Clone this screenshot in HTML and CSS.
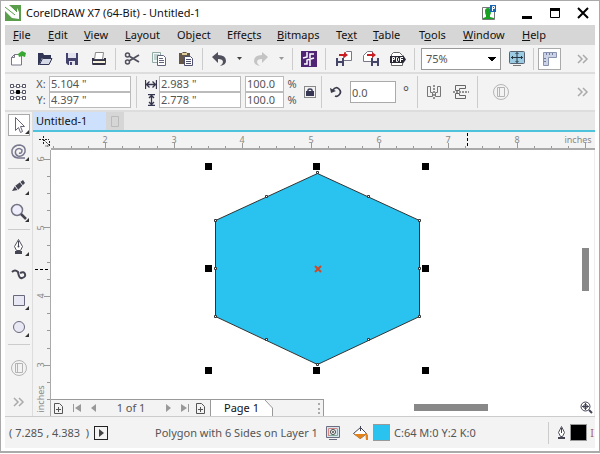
FILE: index.html
```html
<!DOCTYPE html>
<html lang="en">
<head>
<meta charset="utf-8">
<title>CorelDRAW X7 (64-Bit) - Untitled-1</title>
<link rel="stylesheet" href="styles.css">
</head>
<body>
<div class="window">
  <header class="titlebar">
    <svg class="logo" width="16" height="16" viewBox="0 0 16 16"><path fill="#5a9e4b" d="M0 0h16v16H0z"/><path fill="#fff" d="M0 0h4l8 7V3l2 4v7l-7-1-7-7z"/><path stroke="#5a9e4b" d="M0 2l10 8M5 0l7 7"/></svg>
    <h1 class="title">CorelDRAW X7 (64-Bit) - Untitled-1</h1>
    <div class="caption">
      <button class="cap account" aria-label="Account"><svg width="16" height="16" viewBox="0 0 16 16"><path fill="#fff" stroke="#777" d="M1.500 2.500h12v12h-12z"/><path fill="#18a020" d="M4 6q0-3 3-3t3 3q0 3-1 4v2l4 1v1H2v-1l3-1v-2Q4 9 4 6z"/><path fill="#1767b5" d="M9 0h6v7H9z"/><path fill="none" stroke="#fff" d="M11.500 6V1.500h2v2h-2"/></svg></button>
      <button class="cap" aria-label="Minimize"><svg width="12" height="12"><path d="M1 9h10v3H1z"/></svg></button>
      <button class="cap" aria-label="Maximize"><svg width="12" height="12"><path fill="none" stroke="#000" d="M1.500 1.500h9v9h-9z"/><path d="M1 1h10v3H1z"/></svg></button>
      <button class="cap" aria-label="Close"><svg width="12" height="12"><path stroke="#000" stroke-width="2" d="M1 1l10 10M11 1L1 11"/></svg></button>
    </div>
  </header>

  <nav class="menubar">
    <button><u>F</u>ile</button><button><u>E</u>dit</button><button><u>V</u>iew</button><button><u>L</u>ayout</button><button>Ob<u>j</u>ect</button><button>Effe<u>c</u>ts</button><button><u>B</u>itmaps</button><button>Te<u>x</u>t</button><button><u>T</u>able</button><button>T<u>o</u>ols</button><button><u>W</u>indow</button><button><u>H</u>elp</button>
  </nav>

  <div class="toolbar">
    <button class="tool" aria-label="New"><svg width="16" height="16"><path fill="#fff" stroke="#777788" d="M1.500 6.500l3-3h7v10.500h-10zM1.500 6.500h3v-3"/><path fill="#38a832" d="M8 3l4-3 4 2-1 4-3-1-3 1z"/></svg></button>
    <button class="tool" aria-label="Open"><svg width="16" height="16"><path fill="#303654" d="M1 2h5l1 2h7v3H5l-3 7H1z"/><path fill="#d7dbe8" stroke="#303654" d="M5.500 7.500h9.500l-3 6H2.500z"/></svg></button>
    <button class="tool" aria-label="Save"><svg width="16" height="16"><path fill="#43436c" d="M2 2h12v12H4l-2-2z"/><path fill="#e3e4f0" d="M4 2h8v5H4zM5 10h6v4H5z"/><path fill="#43436c" d="M6 11h2v3H6z"/></svg></button>
    <button class="tool" aria-label="Print"><svg width="16" height="16"><path fill="#fff" stroke="#888" d="M4.500 1.500h8l-1 7h-8z"/><path fill="#f5f1dc" stroke="#444458" d="M1.500 8.500h13v5h-13z"/><path fill="#333344" d="M1 7h2v2h10V7h2v3H1zM2 12h12v2H2z"/></svg></button>
    <span class="sep"></span>
    <button class="tool" aria-label="Cut"><svg width="16" height="16" fill="none" stroke="#50505e"><circle cx="3.500" cy="4" r="2" stroke-width="1.500"/><circle cx="3.500" cy="11" r="2" stroke-width="1.500"/><path stroke-width="1.800" d="M5 5l10 6M5 10l10-6"/></svg></button>
    <button class="tool" aria-label="Copy"><svg width="16" height="16"><path fill="#eff7f5" stroke="#91aaa6" d="M1.500 1.500h8v10h-8zM3 4h5M3 6h5M3 8h5"/><path fill="#fff" stroke="#62647e" d="M6.500 4.500h6l2 2v8h-8zM8 7.500h4M8 9.500h5M8 11.500h5"/></svg></button>
    <button class="tool" aria-label="Paste"><svg width="16" height="16"><path fill="#655748" d="M1 2h3l1-1h3l1 1h3v11H1z"/><path fill="#ddd09e" d="M4 2h5v2H4z"/><path fill="#fff" stroke="#4e506d" d="M6.500 5.500h6l2 2v7h-8zM8 8.500h5M8 10.500h5M8 12.500h5"/></svg></button>
    <span class="sep"></span>
    <button class="tool" aria-label="Undo"><svg width="16" height="16"><path fill="#50505c" d="M1 6l6-5v3q8 0 8 6 0 4-6 5 3-2 3-4 0-3-5-3v4z"/></svg></button>
    <button class="drop" aria-label="Undo list"><svg width="5" height="3"><path fill="#444" d="M0 0h5L2.500 3z"/></svg></button>
    <button class="tool" aria-label="Redo"><svg width="16" height="16"><path fill="#c4c4c4" d="M15 6L9 1v3Q1 4 1 10q0 4 6 5-3-2-3-4 0-3 5-3v4z"/></svg></button>
    <button class="drop" aria-label="Redo list"><svg width="5" height="3"><path fill="#999" d="M0 0h5L2.500 3z"/></svg></button>
    <span class="sep"></span>
    <button class="tool" aria-label="Search content"><svg width="16" height="16"><path fill="#512575" d="M0 0h16v16H0z"/><path fill="none" stroke="#fff" stroke-width="1.500" d="M6 1v5L2 7M3 13h3V9l7-2M13 3H9v4M9 9v6"/></svg></button>
    <span class="sep"></span>
    <div class="group">
      <button class="tool" aria-label="Import"><svg width="16" height="16"><path fill="#fff" stroke="#787888" d="M7.500 9.500v-6l3-3h5v9z"/><path fill="#454568" d="M0 7h8v8H0z"/><path fill="#eee" d="M2 7h4v3H2zM2 12h4v3H2z"/><path fill="#c81e22" d="M3 3h5V1l4 3-4 3V5H3z"/></svg></button>
      <button class="tool" aria-label="Export"><svg width="16" height="16"><path fill="#fff" stroke="#787888" d="M.500 10.500v-6l4-4h5v10z"/><path fill="#454568" d="M8 7h8v8H8z"/><path fill="#eee" d="M10 7h4v3h-4zM10 12h4v3h-4z"/><path fill="#c81e22" d="M4 3h5V1l4 3-4 3V5H4z"/></svg></button>
      <button class="tool" aria-label="Publish to PDF"><svg width="16" height="16"><path fill="#fff" stroke="#666" d="M1.500 14.500V3.500l2-2h6l3 3v10z"/><path fill="#292935" d="M0 5h13V4l3 4.500-3 4V12H0z"/><path fill="none" stroke="#fff" d="M2.500 11V6.500h2v2h-2M6.500 6.500h1l1 1v2l-1 1h-1zM10.500 11V6.500H13M11 8.500h2"/></svg></button>
    </div>
    <span class="sep"></span>
    <select class="zoom" aria-label="Zoom level"><option>75%</option></select>
    <button class="tool" aria-label="Full screen preview"><svg width="16" height="16"><rect x=".5" y=".5" width="15" height="12" rx="1" fill="#9bcce3" stroke="#596370"/><path stroke="#283742" fill="none" d="M8 1.500v10M2 6.500h12M6.500 3L8 1.500 9.500 3M6.500 10L8 11.500 9.500 10M4 5L2.500 6.500 4 8M12 5l1.500 1.500L12 8"/><path stroke="#777" d="M4 14.500h8"/></svg></button>
    <span class="sep"></span>
    <button class="tool framed" aria-label="Show rulers"><svg width="16" height="16"><path fill="#ccd2e5" stroke="#8992ae" d="M1.500 1.500h13v5h-8v8h-5z"/><path stroke="#717b9b" d="M4.500 2v2M7.500 2v2M10.500 2v2M2 7.500h2M2 10.500h2"/></svg></button>
    <button class="more" aria-label="More tools"><svg width="12" height="10" fill="none" stroke="#aaa"><path d="M1 1l4 4-4 4M6 1l4 4-4 4" stroke-width="1.500"/></svg></button>
  </div>

  <div class="propbar">
    <button class="tool" aria-label="Object origin"><svg width="16" height="16" fill="#fff" stroke="#555568"><path stroke="#999" d="M1 2.500h14M1 8.500h14M1 13.500h14"/><path d="M.5.5h3v3h-3zM6.500.5h3v3h-3zM12.500.5h3v3h-3zM.5 6.500h3v3h-3zM12.500 6.500h3v3h-3zM.5 12.500h3v3h-3zM6.500 12.500h3v3h-3zM12.500 12.500h3v3h-3z"/><path fill="#000" stroke="#000" d="M6.500 6.500h3v3h-3z"/></svg></button>
    <div class="pair position">
      <label for="px">X:</label><input id="px" value='5.104 "'>
      <label for="py">Y:</label><input id="py" value='4.397 "'>
    </div>
    <span class="sep"></span>
    <div class="pair size">
      <label for="ow" aria-label="Width"><svg width="12" height="9" stroke="#34344f" fill="none"><path d="M.5 0v9M11.500 0v9M2 4.500h8M4.500 1.500l-3 3 3 3M7.500 1.500l3 3-3 3" stroke-width="1.300"/></svg></label><input id="ow" value='2.983 "'>
      <label for="oh" aria-label="Height"><svg width="9" height="12" stroke="#34344f" fill="none"><path d="M1 .5h7M1 11.500h7M4.500 2v8M2 4l2.500-2.500L7 4M2 8l2.500 2.500L7 8" stroke-width="1.300"/></svg></label><input id="oh" value='2.778 "'>
    </div>
    <div class="pair scale">
      <input id="sx" value="100.0"><label for="sx">%</label>
      <input id="sy" value="100.0"><label for="sy">%</label>
    </div>
    <button class="lock" aria-label="Lock ratio"><svg width="8" height="8"><path fill="#373754" d="M0 3h8v5H0z"/><path fill="none" stroke="#373754" stroke-width="1.500" d="M2 3V2q0-1 2-1t2 1v1"/></svg></button>
    <span class="sep"></span>
    <label class="rotate" for="rot" aria-label="Rotation"><svg width="12" height="12" fill="none"><path stroke="#3b3b4b" stroke-width="1.700" d="M3 4q3-4 6-1 3 3 0 6-2 2-4 1"/><path fill="#3b3b4b" d="M0 2l1 5 5-2z"/></svg></label>
    <input id="rot" class="angle" value="0.0">
    <span class="degree">°</span>
    <span class="sep"></span>
    <button class="tool" aria-label="Mirror horizontally"><svg width="16" height="14" fill="none" stroke="#777"><path d="M1.500 1.500v10h5v-4h-2v-6zM14.500 1.500v10h-5v-4h2v-6z"/><path stroke="#333" stroke-dasharray="2 1" d="M8 0v14"/></svg></button>
    <button class="tool" aria-label="Mirror vertically"><svg width="16" height="14" fill="none" stroke="#666"><path d="M12.500.5h-10v5h4v-2h6zM12.500 13.500h-10v-5h4v2h6z"/><path stroke="#333" stroke-dasharray="2 1" d="M0 7h16"/></svg></button>
    <span class="sep"></span>
    <button class="tool quick" aria-label="Quick customize"><svg width="16" height="16" fill="none" stroke="#b4b4b4"><circle cx="8" cy="8" r="7.500"/><path d="M4.500 3.500h7v9h-7zM6.500 3.500v9"/></svg></button>
    <button class="more" aria-label="More properties"><svg width="12" height="10" fill="none" stroke="#aaa"><path d="M1 1l4 4-4 4M6 1l4 4-4 4" stroke-width="1.500"/></svg></button>
  </div>

  <main class="workspace">
    <aside class="toolbox">
      <button class="pick" aria-label="Pick tool"><svg width="20" height="20"><path fill="#fff" stroke="#666678" d="M6.500 2.500v13l3-3 2 5 2-1-2-5h4z"/><path fill="#333" d="M20 15v4h-4z"/></svg></button>
      <button aria-label="Smear tool"><svg width="20" height="20"><path fill="none" stroke="#77778e" stroke-width="1.500" d="M16 16H9Q2 15 3 8q2-5 8-5 6 1 5 7-2 5-7 4-4-2-2-6 3-3 6 0 0 4-3 3"/><path fill="#333" d="M20 15v4h-4z"/></svg></button>
      <hr>
      <button aria-label="Artistic media"><svg width="20" height="20"><path fill="#444452" d="M3 15l3-5 8-6 2 3-7 7z"/><path stroke="#eee" d="M6 10l3 4M11 6l3 4"/><path fill="#333" d="M20 15v4h-4z"/></svg></button>
      <button aria-label="Zoom tool"><svg width="20" height="20"><circle cx="8" cy="7" r="5.500" fill="#eeeefc" stroke="#747485" stroke-width="1.500"/><path stroke="#444454" stroke-width="2.500" d="M12 11l5 5"/><path fill="#333" d="M20 15v4h-4z"/></svg></button>
      <hr>
      <button aria-label="Pen tool"><svg width="20" height="20"><path fill="#fff" stroke="#50505c" d="M7.500 13.500l-2-4 4-7 4 7-2 4z"/><path fill="#444452" d="M6 14h7v3H6zM9 4h1v5H9z"/><circle cx="9.500" cy="9.500" r="1" fill="#444452"/><path fill="#333" d="M20 15v4h-4z"/></svg></button>
      <button aria-label="Curve tool"><svg width="20" height="20"><path fill="none" stroke="#444452" stroke-width="2" d="M3 8q3-3 6 0 1 7 4 6 4-1 3-4t-5-1"/></svg></button>
      <button aria-label="Rectangle tool"><svg width="20" height="20"><path fill="#e8e8f4" stroke="#68687c" d="M4.500 4.500h11v10h-11z"/><path fill="#333" d="M20 15v4h-4z"/></svg></button>
      <button aria-label="Ellipse tool"><svg width="20" height="20"><circle cx="10" cy="9" r="5.500" fill="#e8e8f4" stroke="#68687c"/><path fill="#333" d="M20 15v4h-4z"/></svg></button>
      <hr>
      <button class="customize" aria-label="Quick customize"><svg width="16" height="16" fill="none" stroke="#b4b4b4"><circle cx="8" cy="8" r="7.500"/><path d="M4.500 3.500h7v9h-7zM6.500 3.500v9"/></svg></button>
      <button class="expand" aria-label="More tools"><svg width="12" height="10" fill="none" stroke="#aaa"><path d="M1 1l4 4-4 4M6 1l4 4-4 4" stroke-width="1.500"/></svg></button>
    </aside>

    <section class="document">
      <div class="tabs">
        <button class="tab">Untitled-1</button>
        <button class="newtab" aria-label="New document"><svg width="8" height="11" fill="none" stroke="#bbb"><path d="M.5.5h7v10h-7z"/></svg></button>
      </div>
      <div class="hruler">
        <svg width="100%" height="18">
          <path stroke="#222" fill="none" stroke-dasharray="2 1" d="M10.500 4v8M6 7.500h10M11 8l5 5M16.500 9v5H12"/>
          <path stroke="#999" d="M20.500 14v3M38.500 14v3M55.500 14v3M72.500 11v6M89.500 14v3M106.500 14v3M124.500 14v3M141.500 11v6M158.500 14v3M175.500 14v3M192.500 14v3M209.500 11v6M226.500 14v3M243.500 14v3M261.500 14v3M278.500 11v6M295.500 14v3M312.500 14v3M329.500 14v3M346.500 11v6M363.500 14v3M380.500 14v3M398.500 14v3M415.500 11v6M432.500 14v3M449.500 14v3M466.500 14v3M484.500 11v6M501.500 14v3M518.500 14v3M535.500 14v3M552.500 11v6"/>
          <path stroke="#000" stroke-dasharray="3 2" d="M434.500 1v16"/>
          <path stroke="#aaa" stroke-width="2" d="M18 17h544"/>
          <g class="num"><text x="72" y="11">2</text><text x="141" y="11">3</text><text x="209" y="11">4</text><text x="278" y="11">5</text><text x="346" y="11">6</text><text x="415" y="11">7</text><text x="484" y="11">8</text><text x="545" y="11">inches</text></g>
        </svg>
      </div>
      <div class="editor">
        <div class="vruler">
          <svg width="18" height="100%">
            <path stroke="#999" d="M11 9.500h6M14 26.500h3M14 43.500h3M14 60.500h3M11 77.500h6M14 95.500h3M14 112.500h3M14 129.500h3M11 146.500h6M14 163.500h3M14 180.500h3M14 198.500h3M11 215.500h6M14 232.500h3M14 249.500h3"/>
            <path stroke="#000" stroke-dasharray="3 2" d="M2 119.500h15"/>
            <path stroke="#aaa" stroke-width="2" d="M18 0v266"/>
            <g class="num"><text transform="translate(11 9) rotate(-90)">6</text><text transform="translate(11 78) rotate(-90)">5</text><text transform="translate(11 146) rotate(-90)">4</text><text transform="translate(11 215) rotate(-90)">3</text><text transform="translate(11 249) rotate(-90)">inches</text></g>
          </svg>
        </div>
        <div class="view">
          <div class="stage">
            <svg class="drawing" width="530" height="249">
              <path fill="#2ac2ee" stroke="#333" d="M266.500 23.500l102 47v96l-102 48-102-48v-96z"/>
              <path d="M154 13h7v7h-7zM262 13h7v7h-7zM371 13h7v7h-7zM154 115h7v7h-7zM371 115h7v7h-7zM154 217h7v7h-7zM262 217h7v7h-7zM371 217h7v7h-7z"/>
              <path fill="#fff" stroke="#333" d="M265.500 21.500h2v2h-2zM214.500 45.500h2v2h-2zM316.500 45.500h2v2h-2zM163.500 69.500h2v2h-2zM367.500 69.500h2v2h-2zM163.500 117.500h2v2h-2zM367.500 117.500h2v2h-2zM163.500 165.500h2v2h-2zM367.500 165.500h2v2h-2zM214.500 188.500h2v2h-2zM316.500 188.500h2v2h-2zM265.500 213.500h2v2h-2z"/>
              <path stroke="#d04828" stroke-width="2" d="M264 116l6 6M270 116l-6 6"/>
            </svg>
            <div class="vscroll"></div>
          </div>
          <div class="pagebar">
            <div class="pages">
              <button aria-label="Add page before"><svg width="9" height="11" fill="none" stroke="#555"><path d="M.5.5h5l3 3v7h-8zM4.500 4v5M2 6.500h5"/></svg></button>
              <button aria-label="First page"><svg width="8" height="8" fill="#999"><path d="M0 0h1v8H0zM8 0v8L2 4z"/></svg></button>
              <button aria-label="Previous page"><svg width="5" height="8" fill="#999"><path d="M5 0v8L0 4z"/></svg></button>
              <span class="count">1 of 1</span>
              <button aria-label="Next page"><svg width="5" height="8" fill="#999"><path d="M0 0v8l5-4z"/></svg></button>
              <button aria-label="Last page"><svg width="8" height="8" fill="#999"><path d="M7 0h1v8H7zM0 0v8l6-4z"/></svg></button>
              <button class="add" aria-label="Add page after"><svg width="9" height="11" fill="none" stroke="#555"><path d="M.5.5h5l3 3v7h-8zM4.500 4v5M2 6.500h5"/></svg></button>
              <button class="page">Page 1</button>
              <svg class="slope" width="10" height="16"><path fill="#fff" d="M0 0l7 8v8H0z"/><path fill="none" stroke="#999" d="M0 0l7.500 8v8"/></svg>
              <span class="grip"></span>
            </div>
            <div class="hscroll"></div>
            <button class="navigator" aria-label="Navigator"><svg width="13" height="13" fill="none" stroke="#444457"><circle cx="5.500" cy="5.500" r="4.500"/><circle cx="5.500" cy="5.500" r="2"/><path d="M5.500 2v7M2 5.500h7"/><path stroke-width="2" d="M9 9l3 3"/></svg></button>
          </div>
        </div>
      </div>
    </section>
  </main>

  <footer class="status">
    <span class="coords">( 7.285 , 4.383 &nbsp;)</span>
    <button class="play" aria-label="Details"><svg width="5" height="8"><path fill="#444" d="M0 0v8l5-4z"/></svg></button>
    <span class="object">Polygon with 6 Sides on Layer 1</span>
    <svg class="proof" width="16" height="16"><path fill="#d7e4ed" stroke="#6c6c80" d="M1.500 1.500h13v11h-13zM4 14.500h8"/><path fill="none" stroke="#d38a84" d="M3.500 11V3.500h9"/><path fill="none" stroke="#7fae94" d="M12.500 4v6.500H4"/><circle cx="8" cy="7" r="2.500" fill="#fff" stroke="#444"/><circle cx="8" cy="7" r="1" fill="#444"/></svg>
    <svg class="bucket" width="16" height="16"><path fill="#fff" stroke="#454555" d="M1.500 8.500l7-6 6 6-6 5z"/><path fill="#e4831c" d="M2 9h12l-6 5zM13 7l3 3v5h-2z"/><path stroke="#454555" d="M8.500 1v5"/></svg>
    <span class="swatch cyan"></span>
    <span class="cmyk">C:64 M:0 Y:2 K:0</span>
    <div class="outline">
      <svg width="10" height="16"><path fill="#fff" stroke="#50505c" d="M3.500 11.500l-2-4 3-6 3 6-2 4z"/><path fill="#444452" d="M1 12h7v2H1zM4 3h1v5H4z"/></svg>
      <span class="swatch black"></span>
      <span class="width">I</span>
    </div>
  </footer>
</div>
</body>
</html>
```
FILE: styles.css
```css
* { box-sizing: border-box; }
body {
  margin: 0;
  font-family: "Noto Sans", "Open Sans", sans-serif;
  font-size: 11px;
  line-height: 16px;
  color: #555;
  background: #fff;
}
button, input, select {
  margin: 0;
  padding: 0;
  border: 0;
  border-radius: 0;
  background: none;
  font: inherit;
  color: inherit;
}
button {
  display: flex;
  align-items: center;
  justify-content: center;
  flex: none;
}
svg { display: block; flex: none; }

.window {
  display: flex;
  flex-direction: column;
  min-height: calc(100vh - 1px);
  padding: 0 4px 3px;
  border: 1px solid #aaa;
  border-bottom-width: 2px;
}

.titlebar { display: flex; align-items: center; height: 24px; }
.title { margin: 0; padding-left: 5px; font-size: 11px; font-weight: 400; color: #111; white-space: nowrap; }
.caption { display: flex; align-items: center; margin-left: auto; gap: 16px; padding-right: 6px; }
.cap { width: 12px; height: 20px; }
.account { width: 16px; margin-right: 8px; }

.menubar {
  display: grid;
  grid-template-columns: 35px 36px 41px 52px 50px 50px 59px 37px 46px 44px 59px 1fr;
  height: 20px;
  padding-left: 8px;
  background: #d6d6d6;
  color: #111;
}
.menubar button { display: block; text-align: left; white-space: nowrap; }

.toolbar, .propbar {
  display: flex;
  align-items: center;
  gap: 4px;
  background: #f3f3f3;
  border-bottom: 2px solid #ddd;
}
.toolbar { height: 29px; padding-left: 1px; }
.propbar { height: 38px; padding-left: 1px; }
.group { display: flex; gap: 4px; margin-left: 2px; }
.tool { width: 23px; height: 22px; }
.drop { width: 11px; height: 22px; }
.framed { background: #fff; border: 1px solid #aaa; }
.sep { flex: none; width: 1px; height: 22px; margin-left: 1px; background: #ccc; }
.propbar .sep { height: 32px; }
.more { width: 12px; height: 20px; margin-left: auto; margin-right: 6px; }
.zoom {
  appearance: none;
  width: 80px;
  height: 22px;
  margin-left: 2px;
  padding-left: 4px;
  border: 1px solid #999;
  background-color: #fff;
  background-image: linear-gradient(to bottom left, #000 50%, transparent 51%), linear-gradient(to bottom right, #000 50%, transparent 51%);
  background-size: 4px 4px;
  background-position: right 8px center, right 4px center;
  background-repeat: no-repeat;
}

.pair { display: grid; align-items: center; }
.pair input { width: 100%; height: 16px; padding-left: 1px; border: 1px solid #bbb; background: #fff; }
.pair label { display: flex; justify-content: center; }
.position { grid-template-columns: 16px 82px; }
.size { grid-template-columns: 16px 82px; margin-left: 2px; }
.scale { grid-template-columns: 39px 16px; }
.lock { width: 12px; height: 12px; border: 1px solid #888; }
.rotate { display: flex; justify-content: center; width: 20px; }
.angle { width: 46px; height: 22px; padding-left: 1px; border: 1px solid #aaa; background: #fff; }
.degree { width: 12px; text-align: center; font-size: 14px; }
.quick { margin-left: 7px; }

.workspace { display: flex; flex: 1; background: #f3f3f3; }
.toolbox {
  display: flex;
  flex-direction: column;
  align-items: center;
  width: 28px;
  padding: 2px 2px 0;
  border-right: 1px solid #ddd;
}
.toolbox button { width: 22px; height: 27px; }
.toolbox .pick { height: 22px; margin-bottom: 2px; background: #fff; border: 1px solid #aaa; }
.toolbox hr { width: 22px; margin: 3px 0; border: 0; border-top: 1px solid #ccc; }
.toolbox .customize { height: 40px; }
.toolbox .expand { height: 28px; }

.document { display: flex; flex-direction: column; flex: 1; min-width: 0; }
.tabs { display: flex; height: 20px; background: #e8e8e8; border-bottom: 2px solid #4fc2dc; }
.tab { justify-content: flex-start; width: 73px; padding-left: 3px; background: #cde1fc; color: #111; }
.newtab { width: 18px; background: #d6d6d6; }
.hruler { height: 18px; overflow: hidden; }
.num { font-size: 9px; fill: #888; text-anchor: middle; }
.editor { display: flex; flex: 1; }
.vruler { width: 18px; height: 266px; overflow: hidden; }
.view { display: flex; flex-direction: column; flex: 1; min-width: 0; background: #fff; border-right: 1px solid #eee; }
.stage { display: flex; flex: 1; overflow: hidden; }
.vscroll { width: 7px; height: 43px; margin: 98px 5px 0 auto; background: #888; }
.pagebar { display: flex; align-items: center; height: 17px; }
.pages {
  display: flex;
  align-items: center;
  height: 17px;
  width: 273px;
  padding-left: 3px;
  gap: 10px;
  background: #f3f3f3;
  border-top: 1px solid #999;
  border-right: 1px solid #999;
}
.count { width: 50px; text-align: center; }
.add { margin-left: -3px; }
.page { justify-content: flex-start; height: 16px; width: 55px; margin-left: -5px; padding-left: 13px; background: #fff; border-left: 1px solid #999; color: #111; white-space: nowrap; }
.slope { margin-left: -10px; }
.grip { margin-left: auto; margin-right: 3px; height: 11px; border-left: 2px dotted #aaa; }
.hscroll { width: 74px; height: 7px; margin-left: 90px; background: #888; }
.navigator { margin-left: auto; margin-right: 1px; }

.status {
  display: flex;
  align-items: center;
  height: 32px;
  background: #f3f3f3;
  border-top: 1px solid #ccc;
  white-space: nowrap;
}
.coords { width: 89px; padding-left: 4px; }
.play { width: 14px; height: 14px; border: 1px solid #222; }
.object { width: 172px; margin-left: 47px; }
.proof { margin-left: -2px; }
.bucket { margin-left: 11px; }
.swatch { flex: none; width: 17px; height: 17px; border: 1px solid #999; }
.cyan { margin-left: 5px; background: #2ac2ee; }
.black { background: #000; }
.cmyk { margin-left: 4px; }
.outline { display: flex; align-items: center; gap: 3px; height: 22px; margin-left: auto; padding-left: 8px; border-left: 1px solid #ccc; }
.width { padding-right: 1px; color: #a66; }
```
